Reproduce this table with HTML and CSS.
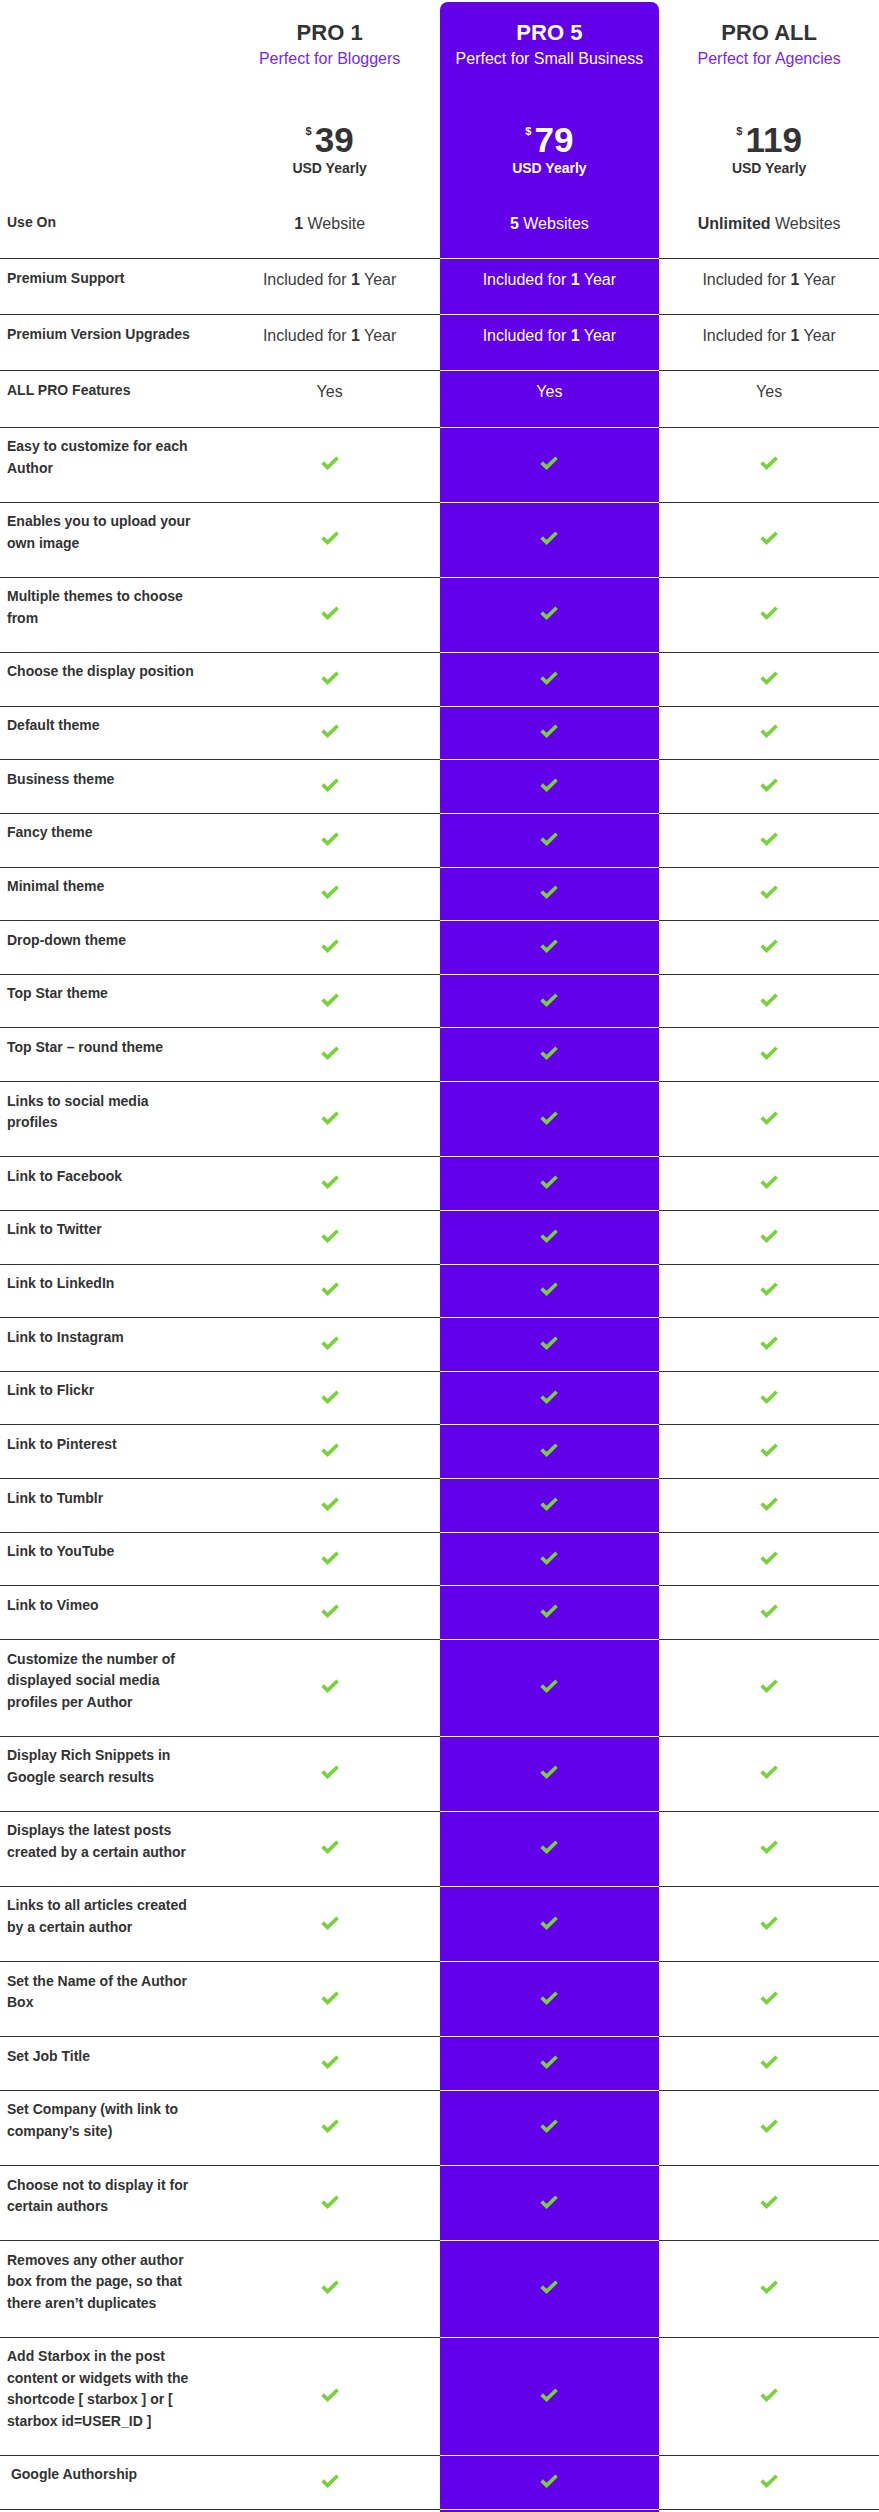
FILE: index.html
```html
<!DOCTYPE html>
<html lang="en">
<head>
<meta charset="utf-8">
<title>Starbox Pricing</title>
<link rel="stylesheet" href="styles.css">
</head>
<body>
<svg class="defs" width="0" height="0" aria-hidden="true">
  <symbol id="chk" viewBox="0 0 18 14">
    <path d="M1.6 6.6 L6.6 11.4 L16.6 1.8" fill="none" stroke="#78d23a" stroke-width="3.6" stroke-linejoin="miter" stroke-linecap="butt"/>
  </symbol>
</svg>
<div class="pricing">
  <div class="row head">
    <div class="cell blank"></div>
    <div class="cell plan">
      <div class="plan-title">PRO 1</div>
      <div class="plan-sub">Perfect for Bloggers</div>
      <div class="price"><span class="cur">$</span><span class="amt">39</span></div>
      <div class="period">USD Yearly</div>
    </div>
    <div class="cell plan hl top">
      <div class="plan-title">PRO 5</div>
      <div class="plan-sub">Perfect for Small Business</div>
      <div class="price"><span class="cur">$</span><span class="amt">79</span></div>
      <div class="period">USD Yearly</div>
    </div>
    <div class="cell plan">
      <div class="plan-title">PRO ALL</div>
      <div class="plan-sub">Perfect for Agencies</div>
      <div class="price"><span class="cur">$</span><span class="amt">119</span></div>
      <div class="period">USD Yearly</div>
    </div>
  </div>

  <div class="row">
    <div class="cell label">Use On</div>
    <div class="cell val"><b>1</b> Website</div>
    <div class="cell val hl"><b>5</b> Websites</div>
    <div class="cell val"><b>Unlimited</b> Websites</div>
  </div>
  <div class="row">
    <div class="cell label">Premium Support</div>
    <div class="cell val">Included for <b>1</b> Year</div>
    <div class="cell val hl">Included for <b>1</b> Year</div>
    <div class="cell val">Included for <b>1</b> Year</div>
  </div>
  <div class="row">
    <div class="cell label">Premium Version Upgrades</div>
    <div class="cell val">Included for <b>1</b> Year</div>
    <div class="cell val hl">Included for <b>1</b> Year</div>
    <div class="cell val">Included for <b>1</b> Year</div>
  </div>
  <div class="row">
    <div class="cell label">ALL PRO Features</div>
    <div class="cell val">Yes</div>
    <div class="cell val hl">Yes</div>
    <div class="cell val">Yes</div>
  </div>

  <div class="row"><div class="cell label">Easy to customize for each Author</div><div class="cell chk"><svg class="ic"><use href="#chk"/></svg></div><div class="cell chk hl"><svg class="ic"><use href="#chk"/></svg></div><div class="cell chk"><svg class="ic"><use href="#chk"/></svg></div></div>
  <div class="row"><div class="cell label">Enables you to upload your own image</div><div class="cell chk"><svg class="ic"><use href="#chk"/></svg></div><div class="cell chk hl"><svg class="ic"><use href="#chk"/></svg></div><div class="cell chk"><svg class="ic"><use href="#chk"/></svg></div></div>
  <div class="row"><div class="cell label">Multiple themes to choose from</div><div class="cell chk"><svg class="ic"><use href="#chk"/></svg></div><div class="cell chk hl"><svg class="ic"><use href="#chk"/></svg></div><div class="cell chk"><svg class="ic"><use href="#chk"/></svg></div></div>
  <div class="row"><div class="cell label">Choose the display position</div><div class="cell chk"><svg class="ic"><use href="#chk"/></svg></div><div class="cell chk hl"><svg class="ic"><use href="#chk"/></svg></div><div class="cell chk"><svg class="ic"><use href="#chk"/></svg></div></div>
  <div class="row"><div class="cell label">Default theme</div><div class="cell chk"><svg class="ic"><use href="#chk"/></svg></div><div class="cell chk hl"><svg class="ic"><use href="#chk"/></svg></div><div class="cell chk"><svg class="ic"><use href="#chk"/></svg></div></div>
  <div class="row"><div class="cell label">Business theme</div><div class="cell chk"><svg class="ic"><use href="#chk"/></svg></div><div class="cell chk hl"><svg class="ic"><use href="#chk"/></svg></div><div class="cell chk"><svg class="ic"><use href="#chk"/></svg></div></div>
  <div class="row"><div class="cell label">Fancy theme</div><div class="cell chk"><svg class="ic"><use href="#chk"/></svg></div><div class="cell chk hl"><svg class="ic"><use href="#chk"/></svg></div><div class="cell chk"><svg class="ic"><use href="#chk"/></svg></div></div>
  <div class="row"><div class="cell label">Minimal theme</div><div class="cell chk"><svg class="ic"><use href="#chk"/></svg></div><div class="cell chk hl"><svg class="ic"><use href="#chk"/></svg></div><div class="cell chk"><svg class="ic"><use href="#chk"/></svg></div></div>
  <div class="row"><div class="cell label">Drop-down theme</div><div class="cell chk"><svg class="ic"><use href="#chk"/></svg></div><div class="cell chk hl"><svg class="ic"><use href="#chk"/></svg></div><div class="cell chk"><svg class="ic"><use href="#chk"/></svg></div></div>
  <div class="row"><div class="cell label">Top Star theme</div><div class="cell chk"><svg class="ic"><use href="#chk"/></svg></div><div class="cell chk hl"><svg class="ic"><use href="#chk"/></svg></div><div class="cell chk"><svg class="ic"><use href="#chk"/></svg></div></div>
  <div class="row"><div class="cell label">Top Star – round theme</div><div class="cell chk"><svg class="ic"><use href="#chk"/></svg></div><div class="cell chk hl"><svg class="ic"><use href="#chk"/></svg></div><div class="cell chk"><svg class="ic"><use href="#chk"/></svg></div></div>
  <div class="row"><div class="cell label">Links to social media profiles</div><div class="cell chk"><svg class="ic"><use href="#chk"/></svg></div><div class="cell chk hl"><svg class="ic"><use href="#chk"/></svg></div><div class="cell chk"><svg class="ic"><use href="#chk"/></svg></div></div>
  <div class="row"><div class="cell label">Link to Facebook</div><div class="cell chk"><svg class="ic"><use href="#chk"/></svg></div><div class="cell chk hl"><svg class="ic"><use href="#chk"/></svg></div><div class="cell chk"><svg class="ic"><use href="#chk"/></svg></div></div>
  <div class="row"><div class="cell label">Link to Twitter</div><div class="cell chk"><svg class="ic"><use href="#chk"/></svg></div><div class="cell chk hl"><svg class="ic"><use href="#chk"/></svg></div><div class="cell chk"><svg class="ic"><use href="#chk"/></svg></div></div>
  <div class="row"><div class="cell label">Link to LinkedIn</div><div class="cell chk"><svg class="ic"><use href="#chk"/></svg></div><div class="cell chk hl"><svg class="ic"><use href="#chk"/></svg></div><div class="cell chk"><svg class="ic"><use href="#chk"/></svg></div></div>
  <div class="row"><div class="cell label">Link to Instagram</div><div class="cell chk"><svg class="ic"><use href="#chk"/></svg></div><div class="cell chk hl"><svg class="ic"><use href="#chk"/></svg></div><div class="cell chk"><svg class="ic"><use href="#chk"/></svg></div></div>
  <div class="row"><div class="cell label">Link to Flickr</div><div class="cell chk"><svg class="ic"><use href="#chk"/></svg></div><div class="cell chk hl"><svg class="ic"><use href="#chk"/></svg></div><div class="cell chk"><svg class="ic"><use href="#chk"/></svg></div></div>
  <div class="row"><div class="cell label">Link to Pinterest</div><div class="cell chk"><svg class="ic"><use href="#chk"/></svg></div><div class="cell chk hl"><svg class="ic"><use href="#chk"/></svg></div><div class="cell chk"><svg class="ic"><use href="#chk"/></svg></div></div>
  <div class="row"><div class="cell label">Link to Tumblr</div><div class="cell chk"><svg class="ic"><use href="#chk"/></svg></div><div class="cell chk hl"><svg class="ic"><use href="#chk"/></svg></div><div class="cell chk"><svg class="ic"><use href="#chk"/></svg></div></div>
  <div class="row"><div class="cell label">Link to YouTube</div><div class="cell chk"><svg class="ic"><use href="#chk"/></svg></div><div class="cell chk hl"><svg class="ic"><use href="#chk"/></svg></div><div class="cell chk"><svg class="ic"><use href="#chk"/></svg></div></div>
  <div class="row"><div class="cell label">Link to Vimeo</div><div class="cell chk"><svg class="ic"><use href="#chk"/></svg></div><div class="cell chk hl"><svg class="ic"><use href="#chk"/></svg></div><div class="cell chk"><svg class="ic"><use href="#chk"/></svg></div></div>
  <div class="row"><div class="cell label">Customize the number of displayed social media profiles per Author</div><div class="cell chk"><svg class="ic"><use href="#chk"/></svg></div><div class="cell chk hl"><svg class="ic"><use href="#chk"/></svg></div><div class="cell chk"><svg class="ic"><use href="#chk"/></svg></div></div>
  <div class="row"><div class="cell label">Display Rich Snippets in Google search results</div><div class="cell chk"><svg class="ic"><use href="#chk"/></svg></div><div class="cell chk hl"><svg class="ic"><use href="#chk"/></svg></div><div class="cell chk"><svg class="ic"><use href="#chk"/></svg></div></div>
  <div class="row"><div class="cell label">Displays the latest posts created by a certain author</div><div class="cell chk"><svg class="ic"><use href="#chk"/></svg></div><div class="cell chk hl"><svg class="ic"><use href="#chk"/></svg></div><div class="cell chk"><svg class="ic"><use href="#chk"/></svg></div></div>
  <div class="row"><div class="cell label">Links to all articles created by a certain author</div><div class="cell chk"><svg class="ic"><use href="#chk"/></svg></div><div class="cell chk hl"><svg class="ic"><use href="#chk"/></svg></div><div class="cell chk"><svg class="ic"><use href="#chk"/></svg></div></div>
  <div class="row"><div class="cell label">Set the Name of the Author Box</div><div class="cell chk"><svg class="ic"><use href="#chk"/></svg></div><div class="cell chk hl"><svg class="ic"><use href="#chk"/></svg></div><div class="cell chk"><svg class="ic"><use href="#chk"/></svg></div></div>
  <div class="row"><div class="cell label">Set Job Title</div><div class="cell chk"><svg class="ic"><use href="#chk"/></svg></div><div class="cell chk hl"><svg class="ic"><use href="#chk"/></svg></div><div class="cell chk"><svg class="ic"><use href="#chk"/></svg></div></div>
  <div class="row"><div class="cell label">Set Company (with link to company’s site)</div><div class="cell chk"><svg class="ic"><use href="#chk"/></svg></div><div class="cell chk hl"><svg class="ic"><use href="#chk"/></svg></div><div class="cell chk"><svg class="ic"><use href="#chk"/></svg></div></div>
  <div class="row"><div class="cell label">Choose not to display it for certain authors</div><div class="cell chk"><svg class="ic"><use href="#chk"/></svg></div><div class="cell chk hl"><svg class="ic"><use href="#chk"/></svg></div><div class="cell chk"><svg class="ic"><use href="#chk"/></svg></div></div>
  <div class="row"><div class="cell label">Removes any other author box from the page, so that there aren’t duplicates</div><div class="cell chk"><svg class="ic"><use href="#chk"/></svg></div><div class="cell chk hl"><svg class="ic"><use href="#chk"/></svg></div><div class="cell chk"><svg class="ic"><use href="#chk"/></svg></div></div>
  <div class="row"><div class="cell label">Add Starbox in the post content or widgets with the shortcode [ starbox ] or [ starbox id=USER_ID ]</div><div class="cell chk"><svg class="ic"><use href="#chk"/></svg></div><div class="cell chk hl"><svg class="ic"><use href="#chk"/></svg></div><div class="cell chk"><svg class="ic"><use href="#chk"/></svg></div></div>
  <div class="row"><div class="cell label">&nbsp;Google Authorship</div><div class="cell chk"><svg class="ic"><use href="#chk"/></svg></div><div class="cell chk hl"><svg class="ic"><use href="#chk"/></svg></div><div class="cell chk"><svg class="ic"><use href="#chk"/></svg></div></div>

  <div class="row foot">
    <div class="cell blank"></div>
    <div class="cell"></div>
    <div class="cell hl bottom"></div>
    <div class="cell"></div>
  </div>
</div>
</body>
</html>
```

FILE: styles.css
```css
html, body {
  margin: 0;
  padding: 0;
  background: #ffffff;
}

body {
  font-family: "Liberation Sans", Arial, Helvetica, sans-serif;
  color: #333333;
}

.defs {
  position: absolute;
  width: 0;
  height: 0;
  overflow: hidden;
}

.pricing {
  width: 879px;
  padding-top: 2px;
}

.row {
  display: grid;
  grid-template-columns: repeat(4, 1fr);
}

.cell {
  border-bottom: 1px solid #333333;
  min-width: 0;
}

.hl {
  background: #6200ea;
  color: #ffffff;
  border-bottom-color: #ffffff;
}

.head .cell {
  border-bottom: 0;
}

.plan {
  display: flex;
  flex-direction: column;
  align-items: center;
  padding: 18px 0 25px;
  text-align: center;
}

.top {
  border-radius: 8px 8px 0 0;
}

.plan-title {
  font-size: 22px;
  line-height: 26px;
  font-weight: bold;
}

.plan-sub {
  font-size: 16px;
  line-height: 26px;
  color: #7a26f0;
}

.hl .plan-sub {
  color: #ffffff;
}

.price {
  display: flex;
  align-items: flex-start;
  margin-top: 50px;
  font-weight: bold;
}

.cur {
  font-size: 11px;
  line-height: 11px;
  margin-top: 4px;
  margin-right: 3px;
}

.amt {
  font-size: 35px;
  line-height: 35px;
}

.period {
  margin-top: 1px;
  font-size: 14px;
  line-height: 20px;
  font-weight: bold;
}

.label {
  padding: 8.5px 25px 22.65px 7px;
  font-size: 14px;
  line-height: 21.5px;
  font-weight: bold;
  color: #333333;
}

.val {
  padding: 8.5px 6px 22.65px;
  font-size: 16px;
  line-height: 24px;
  text-align: center;
  color: #3d3d3d;
}

.val b {
  color: #333333;
}

.hl.val,
.hl.val b {
  color: #ffffff;
}

.chk {
  display: flex;
  align-items: center;
  justify-content: center;
  padding-bottom: 3px;
}

.ic {
  width: 18px;
  height: 14px;
  display: block;
}

.foot .cell {
  border-bottom: 0;
  height: 60px;
}

.bottom {
  border-radius: 0 0 8px 8px;
}
```
